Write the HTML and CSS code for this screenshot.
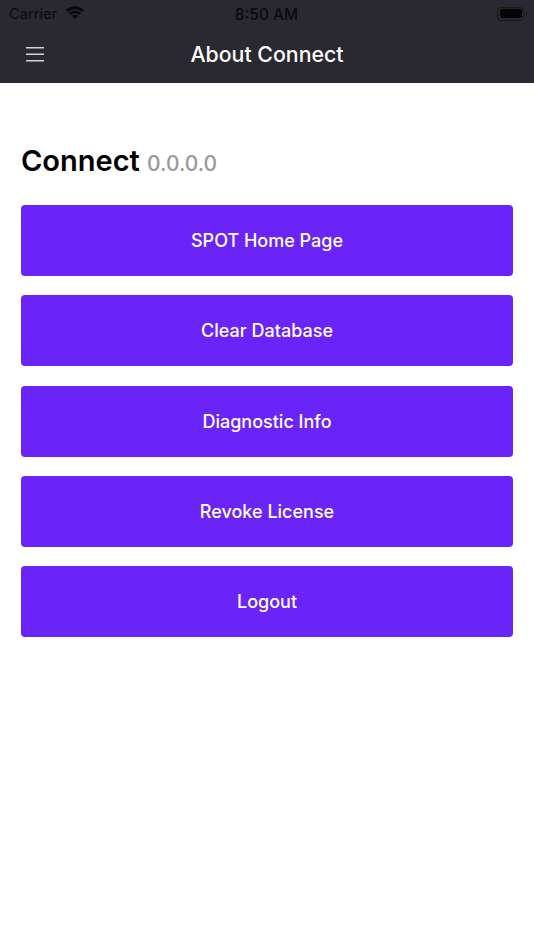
FILE: index.html
```
<!DOCTYPE html>
<html lang="en">
<head>
<meta charset="utf-8">
<title>About Connect</title>
<link rel="stylesheet" href="styles.css">
</head>
<body>
<header class="chrome">
  <div class="status">
    <div class="status-left">
      <span class="carrier">Carrier</span>
      <svg class="wifi" viewBox="0 0 20 14" width="20" height="14" aria-hidden="true"><path d="M10 3.300c2.700 0 5.200 1.100 7 2.800l2-2.100C16.700 1.700 13.500.300 10 .300S3.300 1.700 1 4l2 2.100c1.800-1.700 4.300-2.800 7-2.800z"/><path d="M10 7.300c1.600 0 3.100.6 4.200 1.700l2-2.100C14.500 5.300 12.400 4.400 10 4.400s-4.500.9-6.200 2.500l2 2.100c1.100-1.100 2.600-1.700 4.200-1.700z"/><path d="M10 8.600c-1.200 0-2.200.4-3 1.200l3 3.400 3-3.400c-.8-.8-1.800-1.200-3-1.200z"/></svg>
    </div>
    <span class="clock">8:50 AM</span>
    <div class="battery-wrap"><div class="battery"><span class="battery-fill"></span></div><span class="battery-nub"></span></div>
  </div>
  <nav class="navbar">
    <button class="menu" aria-label="Menu"><svg viewBox="0 0 18 15" width="18" height="15" aria-hidden="true"><path d="M0 .8h18M0 7.300h18M0 13.800h18"/></svg></button>
    <h1 class="nav-title">About Connect</h1>
  </nav>
</header>
<main class="content">
  <h2 class="app-name">Connect <span class="version">0.0.0.0</span></h2>
  <div class="actions">
    <button class="action">SPOT Home Page</button>
    <button class="action">Clear Database</button>
    <button class="action">Diagnostic Info</button>
    <button class="action">Revoke License</button>
    <button class="action">Logout</button>
  </div>
</main>
</body>
</html>
```
FILE: styles.css
```
* { box-sizing: border-box; }
html, body { margin: 0; padding: 0; }
body { width: 534px; height: 950px; background: #fff; font-family: Inter, "Liberation Sans", sans-serif; overflow: hidden; }
.chrome { height: 83px; background: #2a2831; display: flex; flex-direction: column; }
.status { height: 28px; padding: 0 9px; display: grid; grid-template-columns: 1fr auto 1fr; align-items: center; color: #0a0a0c; font-size: 14.700px; }
.status-left { display: flex; align-items: center; gap: 8px; }
.carrier { font-weight: 400; }
.wifi { fill: #0a0a0c; margin-top: -2px; }
.clock { font-size: 15.500px; font-weight: 500; margin-left: -1px; }
.battery-wrap { justify-self: end; display: flex; align-items: center; gap: 1.500px; margin-right: -1.500px; }
.battery { width: 27px; height: 14px; border: 1px solid #17161b; border-radius: 4px; padding: 1.500px; margin-top: -1px; }
.battery-fill { display: block; height: 100%; background: #050506; border-radius: 2px; }
.battery-nub { width: 1px; height: 4px; background: #17161b; margin-top: -1px; }
.navbar { flex: 1; display: flex; align-items: center; justify-content: center; position: relative; padding-bottom: 3px; }
.menu { position: absolute; left: 26px; top: 19px; width: 18px; height: 15px; padding: 0; border: 0; background: none; display: flex; }
.menu path { stroke: #d4d4d6; stroke-width: 1.500; fill: none; }
.nav-title { margin: 0; color: #fff; font-size: 21.300px; font-weight: 500; }
.content { padding: 60px 21px 0; }
.app-name { margin: 0 0 26px; color: #000; font-size: 29px; font-weight: 600; line-height: 36px; height: 36px; }
.version { color: #999; font-size: 21px; font-weight: 500; }
.actions { display: flex; flex-direction: column; gap: 19.250px; }
.action { height: 71px; border: 0; border-radius: 4px; background: #6a24f7; color: #fff; font: 500 18px Inter, "Liberation Sans", sans-serif; }
```
